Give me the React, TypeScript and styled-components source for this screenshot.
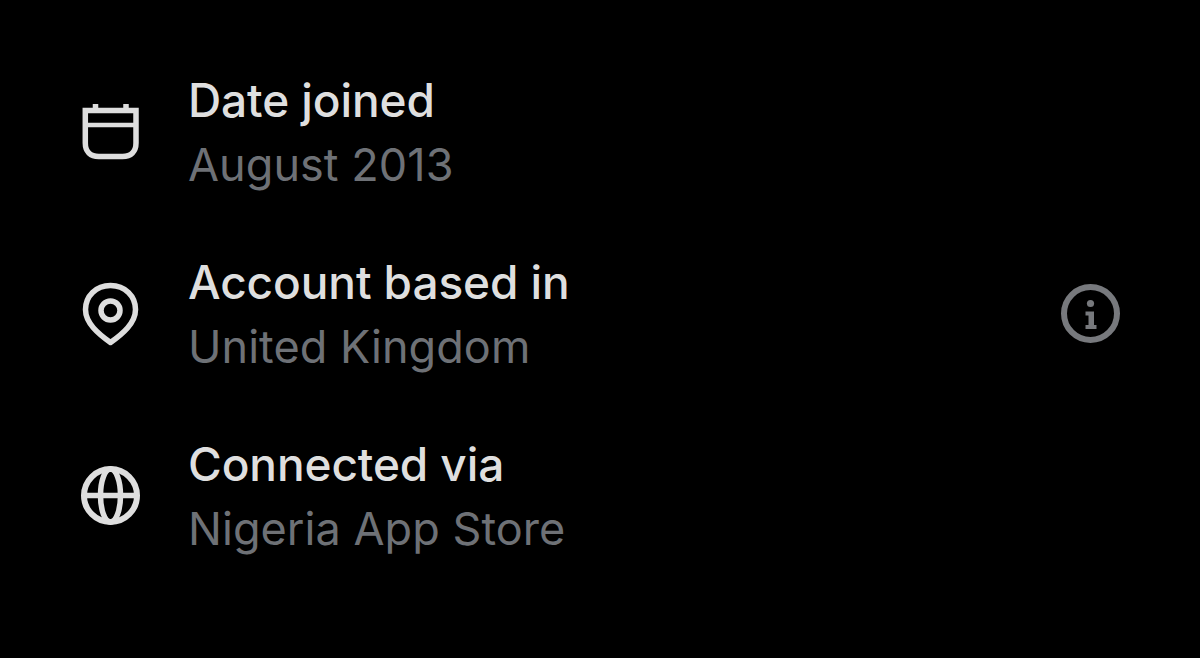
import React from 'react'
import styled, { createGlobalStyle } from 'styled-components'

const GlobalStyle = createGlobalStyle`
  html, body {
    margin: 0;
    padding: 0;
    background: #000;
  }
`

const Page = styled.div`
  width: 1200px;
  height: 658px;
  box-sizing: border-box;
  padding: 67.5px 80px 0 81px;
  background: #000;
  display: flex;
  flex-direction: column;
  gap: 55px;
  overflow: hidden;
  font-family: Inter, 'Liberation Sans', sans-serif;
`

const Row = styled.div`
  display: flex;
  align-items: center;
  height: 127px;
`

const IconBox = styled.div`
  width: 59px;
  height: 59px;
  flex: none;
  margin-right: 48px;
  color: #dedede;
  svg {
    display: block;
    overflow: visible;
  }
`

const TextBlock = styled.div`
  flex: 1;
  display: flex;
  flex-direction: column;
  gap: 10.5px;
  padding-top: 2.5px;
`

const Title = styled.div`
  font-size: 46px;
  line-height: 54px;
  font-weight: 500;
  letter-spacing: -0.1px;
  color: #dfdfdf;
`

const Sub = styled.div`
  font-size: 45px;
  line-height: 54px;
  font-weight: 400;
  letter-spacing: 0.05px;
  color: #6e7176;
`

const InfoBox = styled.div`
  width: 59px;
  height: 59px;
  flex: none;
  color: #77797d;
  svg {
    display: block;
  }
`

const CalendarIcon = () => (
  <svg width="59" height="59" viewBox="0 0 59 59" fill="none" stroke="currentColor" strokeWidth="5.5">
    <path d="M4.3 8.5H55V41C55 49.5 50 54.5 41.5 54.5H17.8C9.3 54.5 4.3 49.5 4.3 41Z" />
    <path d="M4.3 23H55" strokeWidth="4.5" />
    <path d="M14.5 2V8M45 2V8" />
  </svg>
)

const PinIcon = () => (
  <svg width="59" height="59" viewBox="0 0 59 59" fill="none" stroke="currentColor" strokeWidth="5.5">
    <path
      d="M29.5 1.5C15 1.5 4.5 12 4.5 25.5C4.5 39 17 49.5 29.5 58.5C42 49.5 54.5 39 54.5 25.5C54.5 12 44 1.5 29.5 1.5Z"
      strokeLinejoin="round"
    />
    <circle cx="29.5" cy="26.5" r="9.5" />
  </svg>
)

const GlobeIcon = () => (
  <svg width="59" height="59" viewBox="0 0 59 59" fill="none" stroke="currentColor" strokeWidth="5.5">
    <circle cx="29.5" cy="29.5" r="26.5" strokeWidth="6" />
    <ellipse cx="29.5" cy="29.5" rx="10" ry="26.5" />
    <path d="M3 29.5H56" />
  </svg>
)

const InfoIcon = () => (
  <svg width="59" height="59" viewBox="0 0 59 59" fill="none">
    <circle cx="29.5" cy="29.5" r="26.5" stroke="currentColor" strokeWidth="6" />
    <circle cx="29.5" cy="19.5" r="3.6" fill="currentColor" />
    <path d="M24.5 27.5H33V41H35.5V45H24.5V41H27.5V31.5H24.5Z" fill="currentColor" />
  </svg>
)

export default function App() {
  return (
    <>
      <GlobalStyle />
      <Page>
        <Row>
          <IconBox>
            <CalendarIcon />
          </IconBox>
          <TextBlock>
            <Title>Date joined</Title>
            <Sub>August 2013</Sub>
          </TextBlock>
        </Row>
        <Row>
          <IconBox>
            <PinIcon />
          </IconBox>
          <TextBlock>
            <Title>Account based in</Title>
            <Sub>United Kingdom</Sub>
          </TextBlock>
          <InfoBox>
            <InfoIcon />
          </InfoBox>
        </Row>
        <Row>
          <IconBox>
            <GlobeIcon />
          </IconBox>
          <TextBlock>
            <Title>Connected via</Title>
            <Sub>Nigeria App Store</Sub>
          </TextBlock>
        </Row>
      </Page>
    </>
  )
}
